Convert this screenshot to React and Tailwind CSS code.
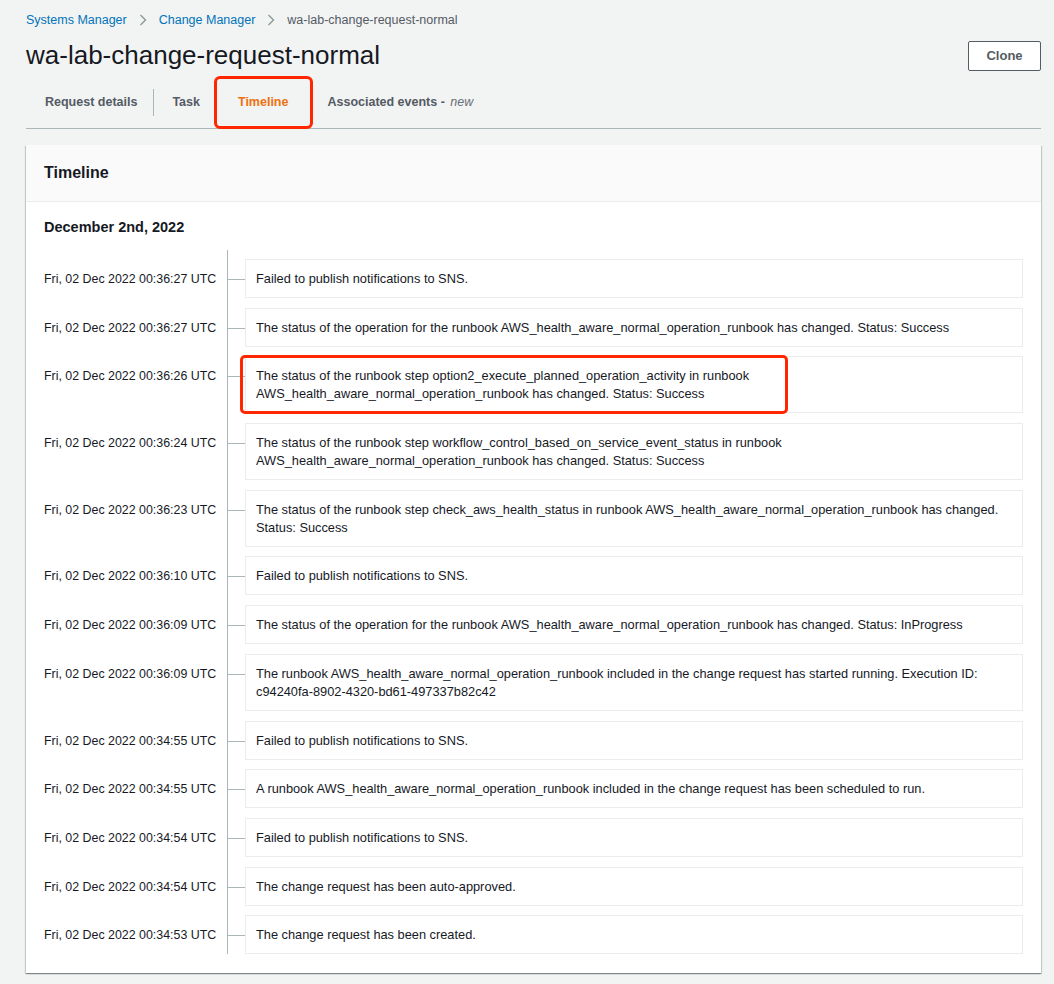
import React from 'react'

const events = [
  { time: 'Fri, 02 Dec 2022 00:36:27 UTC', text: 'Failed to publish notifications to SNS.' },
  { time: 'Fri, 02 Dec 2022 00:36:27 UTC', text: 'The status of the operation for the runbook AWS_health_aware_normal_operation_runbook has changed. Status: Success' },
  { time: 'Fri, 02 Dec 2022 00:36:26 UTC', text: 'The status of the runbook step option2_execute_planned_operation_activity in runbook AWS_health_aware_normal_operation_runbook has changed. Status: Success', marked: true },
  { time: 'Fri, 02 Dec 2022 00:36:24 UTC', text: 'The status of the runbook step workflow_control_based_on_service_event_status in runbook AWS_health_aware_normal_operation_runbook has changed. Status: Success' },
  { time: 'Fri, 02 Dec 2022 00:36:23 UTC', text: 'The status of the runbook step check_aws_health_status in runbook AWS_health_aware_normal_operation_runbook has changed. Status: Success' },
  { time: 'Fri, 02 Dec 2022 00:36:10 UTC', text: 'Failed to publish notifications to SNS.' },
  { time: 'Fri, 02 Dec 2022 00:36:09 UTC', text: 'The status of the operation for the runbook AWS_health_aware_normal_operation_runbook has changed. Status: InProgress' },
  { time: 'Fri, 02 Dec 2022 00:36:09 UTC', text: 'The runbook AWS_health_aware_normal_operation_runbook included in the change request has started running. Execution ID: c94240fa-8902-4320-bd61-497337b82c42' },
  { time: 'Fri, 02 Dec 2022 00:34:55 UTC', text: 'Failed to publish notifications to SNS.' },
  { time: 'Fri, 02 Dec 2022 00:34:55 UTC', text: 'A runbook AWS_health_aware_normal_operation_runbook included in the change request has been scheduled to run.' },
  { time: 'Fri, 02 Dec 2022 00:34:54 UTC', text: 'Failed to publish notifications to SNS.' },
  { time: 'Fri, 02 Dec 2022 00:34:54 UTC', text: 'The change request has been auto-approved.' },
  { time: 'Fri, 02 Dec 2022 00:34:53 UTC', text: 'The change request has been created.' },
]

function Chevron() {
  return (
    <svg width="8" height="12" viewBox="0 0 8 12" className="mx-[12px]">
      <polyline points="1.5,1 6.5,6 1.5,11" fill="none" stroke="#879596" strokeWidth="1.3" />
    </svg>
  )
}

export default function App() {
  return (
    <div
      className="min-h-screen bg-[#f2f3f3] pl-[26px] pr-[13px] text-[#16191f]"
      style={{ fontFamily: '"Liberation Sans", Arial, sans-serif' }}
    >
      {/* breadcrumbs */}
      <div className="flex h-[40px] items-center text-[12.5px]">
        <span className="text-[#0073bb]">Systems Manager</span>
        <Chevron />
        <span className="text-[#0073bb]">Change Manager</span>
        <Chevron />
        <span className="text-[#545b64]">wa-lab-change-request-normal</span>
      </div>

      {/* title */}
      <div className="flex h-[30px] items-center justify-between">
        <h1 className="text-[26px] leading-[30px] font-normal">wa-lab-change-request-normal</h1>
        <button className="mt-[2px] h-[30px] w-[73px] rounded-[2px] border border-[#545b64] bg-white text-[13px] font-bold text-[#545b64]">
          Clone
        </button>
      </div>

      {/* tabs */}
      <div className="mt-[6px] flex h-[53px] items-center border-b border-[#aab7b8] text-[12.5px] font-bold text-[#545b64]">
        <div className="pl-[19px] pr-[16px]">Request details</div>
        <div className="h-[27px] w-px bg-[#aab7b8]" />
        <div className="pl-[18px] pr-[19px]">Task</div>
        <div className="relative flex h-full items-center px-[19px] text-[#ec7211]">
          Timeline
          <div className="absolute left-[-5px] top-0 h-[53px] w-[99px] rounded-[6px] border-[3.5px] border-[#ff2600]" />
        </div>
        <div className="pl-[20px]">
          Associated events - <span className="ml-[2px] font-normal italic text-[#687078]">new</span>
        </div>
      </div>

      {/* panel */}
      <div className="mt-[16px] bg-white shadow-[0_1px_1px_0_rgba(0,28,36,0.3),1px_1px_1px_0_rgba(0,28,36,0.15),-1px_1px_1px_0_rgba(0,28,36,0.15)]">
        <div className="border-b border-[#eaeded] bg-[#fafafa] px-[18px] py-[18px] text-[16px] leading-[20px] font-bold">
          Timeline
        </div>
        <div className="px-[18px] pb-[19px] pt-[15px]">
          <div className="text-[14.5px] leading-[20px] font-bold">December 2nd, 2022</div>
          <div className="mt-[13px]">
            <div className="ml-[183px] h-[9px] border-l border-[#aab7b8]" />
            {events.map((e, i) => (
              <div key={i} className="flex text-[12.8px] leading-[18px]">
                <div className="w-[183px] shrink-0 pt-[11px] text-[12.4px]">{e.time}</div>
                <div
                  className={
                    'flex flex-1 border-l border-[#aab7b8] ' + (i < events.length - 1 ? 'pb-[9.7px]' : '')
                  }
                >
                  <div className="mt-[20px] h-px w-[17px] shrink-0 bg-[#aab7b8]" />
                  <div className="relative flex-1 border border-[#eaeded] px-[10px] pb-[9px] pt-[10px]">
                    {e.text}
                    {e.marked && (
                      <div className="absolute left-[-6px] top-[-2px] h-[59px] w-[548px] rounded-[5px] border-[3.5px] border-[#ff2600]" />
                    )}
                  </div>
                </div>
              </div>
            ))}
          </div>
        </div>
      </div>
    </div>
  )
}
